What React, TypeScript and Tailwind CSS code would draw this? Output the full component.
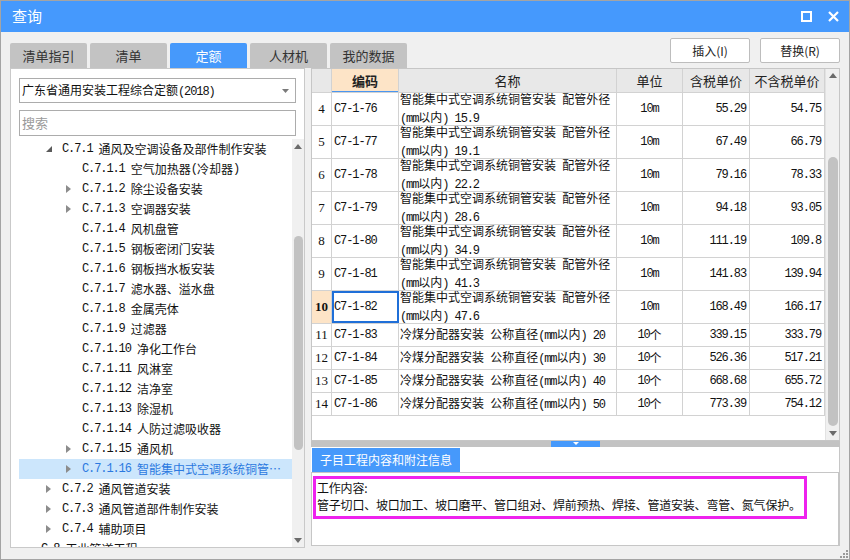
import React from "react";

type TreeNode = {
  code: string;
  name: string;
  level: 0 | 1 | 2;
  arrow?: "open" | "closed";
  sel?: boolean;
};

type Row = {
  no: number;
  code: string;
  name: string[];
  unit: string;
  tax: string;
  notax: string;
};

const tree: TreeNode[] = [
  { code: "C.7.1", name: "通风及空调设备及部件制作安装", level: 1, arrow: "open" },
  { code: "C.7.1.1", name: "空气加热器(冷却器)", level: 2 },
  { code: "C.7.1.2", name: "除尘设备安装", level: 2, arrow: "closed" },
  { code: "C.7.1.3", name: "空调器安装", level: 2, arrow: "closed" },
  { code: "C.7.1.4", name: "风机盘管", level: 2 },
  { code: "C.7.1.5", name: "钢板密闭门安装", level: 2 },
  { code: "C.7.1.6", name: "钢板挡水板安装", level: 2 },
  { code: "C.7.1.7", name: "滤水器、溢水盘", level: 2 },
  { code: "C.7.1.8", name: "金属壳体", level: 2 },
  { code: "C.7.1.9", name: "过滤器", level: 2 },
  { code: "C.7.1.10", name: "净化工作台", level: 2 },
  { code: "C.7.1.11", name: "风淋室", level: 2 },
  { code: "C.7.1.12", name: "洁净室", level: 2 },
  { code: "C.7.1.13", name: "除湿机", level: 2 },
  { code: "C.7.1.14", name: "人防过滤吸收器", level: 2 },
  { code: "C.7.1.15", name: "通风机", level: 2, arrow: "closed" },
  { code: "C.7.1.16", name: "智能集中式空调系统铜管…", level: 2, arrow: "closed", sel: true },
  { code: "C.7.2", name: "通风管道安装", level: 1, arrow: "closed" },
  { code: "C.7.3", name: "通风管道部件制作安装", level: 1, arrow: "closed" },
  { code: "C.7.4", name: "辅助项目", level: 1, arrow: "closed" },
  { code: "C.8", name: "工业管道工程", level: 0 },
];

const pipe = "智能集中式空调系统铜管安装 配管外径";
const dist = "冷煤分配器安装 公称直径(mm以内) ";

const rows: Row[] = [
  { no: 4, code: "C7-1-76", name: [pipe, "(mm以内) 15.9"], unit: "10m", tax: "55.29", notax: "54.75" },
  { no: 5, code: "C7-1-77", name: [pipe, "(mm以内) 19.1"], unit: "10m", tax: "67.49", notax: "66.79" },
  { no: 6, code: "C7-1-78", name: [pipe, "(mm以内) 22.2"], unit: "10m", tax: "79.16", notax: "78.33" },
  { no: 7, code: "C7-1-79", name: [pipe, "(mm以内) 28.6"], unit: "10m", tax: "94.18", notax: "93.05" },
  { no: 8, code: "C7-1-80", name: [pipe, "(mm以内) 34.9"], unit: "10m", tax: "111.19", notax: "109.8" },
  { no: 9, code: "C7-1-81", name: [pipe, "(mm以内) 41.3"], unit: "10m", tax: "141.83", notax: "139.94" },
  { no: 10, code: "C7-1-82", name: [pipe, "(mm以内) 47.6"], unit: "10m", tax: "168.49", notax: "166.17" },
  { no: 11, code: "C7-1-83", name: [dist + "20"], unit: "10个", tax: "339.15", notax: "333.79" },
  { no: 12, code: "C7-1-84", name: [dist + "30"], unit: "10个", tax: "526.36", notax: "517.21" },
  { no: 13, code: "C7-1-85", name: [dist + "40"], unit: "10个", tax: "668.68", notax: "655.72" },
  { no: 14, code: "C7-1-86", name: [dist + "50"], unit: "10个", tax: "773.39", notax: "754.12" },
];

const levelPad = {
  0: "pl-[2px]",
  1: "pl-[23px]",
  2: "pl-[43px]",
};

// ascii runs get a narrow mono face, like the half-width glyphs of the original
function Mix({ s }: { s: string }) {
  return (
    <>
      {s.split(/([ -~]+)/).map((p, i) =>
        /^[ -~]+$/.test(p) ? (
          <span
            key={i}
            className="[font-family:'Liberation_Mono',monospace] text-[12px] tracking-[-1.1px] whitespace-pre"
          >
            {p}
          </span>
        ) : (
          <span key={i}>{p}</span>
        )
      )}
    </>
  );
}

function UpArrow() {
  return (
    <svg width="8" height="5" viewBox="0 0 8 5">
      <path d="M0 5 L4 0 L8 5 Z" fill="#6b6b6b" />
    </svg>
  );
}

function DownArrow() {
  return (
    <svg width="8" height="5" viewBox="0 0 8 5">
      <path d="M0 0 L8 0 L4 5 Z" fill="#6b6b6b" />
    </svg>
  );
}

function TreeArrow({ kind }: { kind?: "open" | "closed" }) {
  if (kind === "open")
    return (
      <svg width="6" height="6" viewBox="0 0 6 6">
        <path d="M6 0 L6 6 L0 6 Z" fill="#5a5a5a" />
      </svg>
    );
  if (kind === "closed")
    return (
      <svg width="5" height="8" viewBox="0 0 5 8">
        <path d="M0 0 L5 4 L0 8 Z" fill="#8c8c8c" />
      </svg>
    );
  return null;
}

function TreePanel() {
  return (
    <div className="flex flex-1 min-h-0 mt-[3px]">
      <div className="flex-1 overflow-hidden text-[12px]">
        {tree.map((n) => (
          <div
            key={n.code}
            className={`ml-[8px] h-[20px] flex items-center whitespace-nowrap ${levelPad[n.level]} ${
              n.sel ? "bg-[#cce6fc] text-[#2b79e0]" : "text-[#111]"
            }`}
          >
            <span className="w-[20px] h-[20px] flex items-center pl-[4px]">
              <TreeArrow kind={n.arrow} />
            </span>
            <Mix s={`${n.code} ${n.name}`} />
          </div>
        ))}
      </div>
      <div className="w-[12px] flex flex-col items-center bg-[#f0f0f0]">
        <div className="h-[14px] flex items-center">
          <UpArrow />
        </div>
        <div className="h-[83px]" />
        <div className="h-[214px] w-[9px] rounded-full bg-[#c2c2c2]" />
        <div className="flex-1" />
        <div className="h-[14px] flex items-center">
          <DownArrow />
        </div>
      </div>
    </div>
  );
}

function LeftPanel() {
  return (
    <div className="w-[295px] h-[480px] border border-[#c9c9c9] bg-white flex flex-col">
      <div className="mt-[9px] mx-[8px] h-[25px] border border-[#acacac] flex items-center pl-[2px] pr-[6px] text-[12px] text-[#111]">
        <span className="flex-1">
          <Mix s="广东省通用安装工程综合定额(2018)" />
        </span>
        <svg width="7" height="4" viewBox="0 0 7 4">
          <path d="M0 0 L7 0 L3.5 4 Z" fill="#7a7a7a" />
        </svg>
      </div>
      <div className="mt-[7px] mx-[8px] h-[26px] border border-[#acacac] flex items-center pl-[2px] text-[13px] text-[#9a9a9a]">
        搜索
      </div>
      <TreePanel />
    </div>
  );
}

const cols = {
  no: "w-[20px]",
  code: "w-[67px]",
  name: "w-[218px]",
  unit: "w-[66px]",
  tax: "w-[67px]",
  notax: "w-[75px]",
};

function TableArea() {
  return (
    <div className="h-[373px] border border-[#c6c6c6] bg-white flex">
      <div className="w-[513px] flex flex-col">
        <div className="h-[24px] flex bg-[#e8e8e8] border-b border-[#d2d2d2] text-[13px] text-[#222]">
          <div className={`${cols.no} border-r border-[#d2d2d2]`} />
          <div
            className={`${cols.code} border-r border-[#d2d2d2] bg-[#fde4c7] font-bold flex items-center justify-center shadow-[inset_0_-1px_0_#4a96f0]`}
          >
            编码
          </div>
          <div className={`${cols.name} border-r border-[#d2d2d2] flex items-center justify-center`}>名称</div>
          <div className={`${cols.unit} border-r border-[#d2d2d2] flex items-center justify-center`}>单位</div>
          <div className={`${cols.tax} border-r border-[#d2d2d2] flex items-center justify-center`}>含税单价</div>
          <div className={`${cols.notax} border-r border-[#d2d2d2] flex items-center justify-center`}>不含税单价</div>
        </div>
        {rows.map((r) => {
          const tall = r.name.length > 1;
          const cur = r.no === 10;
          return (
            <div
              key={r.no}
              className={`${tall ? "h-[33px]" : "h-[23px]"} flex border-b border-[#d2d2d2] text-[12px] text-[#111]`}
            >
              <div
                className={`${cols.no} border-r border-[#d2d2d2] flex items-center justify-center [font-family:'Liberation_Serif',serif] text-[13px] ${
                  cur ? "bg-[#fde4c7] font-bold" : ""
                }`}
              >
                {r.no}
              </div>
              <div
                className={`${cols.code} border-r border-[#d2d2d2] flex items-center px-[2px] ${
                  cur ? "outline-2 outline-[#1f6fd8] -outline-offset-2" : ""
                }`}
              >
                <Mix s={r.code} />
              </div>
              <div
                className={`${cols.name} border-r border-[#d2d2d2] flex flex-col justify-center px-[1px] leading-[16px] whitespace-nowrap overflow-hidden`}
              >
                {r.name.map((l) => (
                  <div key={l}>
                    <Mix s={l} />
                  </div>
                ))}
              </div>
              <div className={`${cols.unit} border-r border-[#d2d2d2] flex items-center justify-center`}>
                <Mix s={r.unit} />
              </div>
              <div className={`${cols.tax} border-r border-[#d2d2d2] flex items-center justify-end pr-[3px]`}>
                <Mix s={r.tax} />
              </div>
              <div className={`${cols.notax} border-r border-[#d2d2d2] flex items-center justify-end pr-[3px]`}>
                <Mix s={r.notax} />
              </div>
            </div>
          );
        })}
      </div>
      <div className="w-[14px] flex flex-col items-center bg-[#f0f0f0] border-l border-[#e2e2e2]">
        <div className="h-[14px] flex items-center">
          <UpArrow />
        </div>
        <div className="h-[74px]" />
        <div className="h-[270px] w-[10px] rounded-full bg-[#c2c2c2]" />
        <div className="flex-1" />
        <div className="h-[14px] flex items-center">
          <DownArrow />
        </div>
      </div>
    </div>
  );
}

function BottomArea() {
  return (
    <div className="flex-1 flex flex-col bg-white border-r border-[#c6c6c6]">
      <div className="pt-[1px] flex">
        <div className="ml-[1px] w-[148px] h-[24px] bg-[#4699fb] text-white text-[12px] flex items-center justify-center">
          子目工程内容和附注信息
        </div>
      </div>
      <div className="h-[74px] border border-[#c6c6c6] bg-white">
        <div className="ml-[1px] mt-[3px] w-[494px] h-[43px] border-[3px] border-[#ee22ee] px-[1px] text-[12px] leading-[17px] text-[#111] whitespace-nowrap tracking-[-0.2px] overflow-hidden">
          <div>工作内容:</div>
          <div>管子切口、坡口加工、坡口磨平、管口组对、焊前预热、焊接、管道安装、弯管、氮气保护。</div>
        </div>
      </div>
    </div>
  );
}

const tabs = ["清单指引", "清单", "定额", "人材机", "我的数据"];

export default function App() {
  return (
    <div className="w-[850px] h-[560px] bg-[#f0f0f0] border border-[#a4a4a4] flex flex-col [font-family:'Noto_Sans_CJK_SC',sans-serif] overflow-hidden">
      <div className="h-[31px] bg-[#4599fd] flex items-center pl-[11px] pr-[10px] text-white">
        <span className="text-[15px] flex-1">查询</span>
        <svg width="11" height="11" viewBox="0 0 11 11" className="mr-[16px]">
          <rect x="1" y="1" width="9" height="9" fill="none" stroke="#fff" strokeWidth="2" />
        </svg>
        <svg width="11" height="11" viewBox="0 0 11 11">
          <path d="M1 1 L10 10 M10 1 L1 10" stroke="#fff" strokeWidth="2.2" />
        </svg>
      </div>
      <div className="h-[36px] flex px-[9px]">
        <div className="flex items-end gap-[3px]">
          {tabs.map((t) => (
            <div
              key={t}
              className={`w-[77px] h-[25px] flex items-center justify-center text-[13px] rounded-t-[2px] ${
                t === "定额" ? "bg-[#4699fb] text-white" : "bg-[#c3c3c3] text-[#333]"
              }`}
            >
              {t}
            </div>
          ))}
        </div>
        <div className="flex-1" />
        <div className="flex gap-[10px] mt-[6px]">
          <button className="w-[80px] h-[25px] bg-white border border-[#bdbdbd] rounded-[2px] text-[12px] text-[#222]">
            插入(I)
          </button>
          <button className="w-[80px] h-[25px] bg-white border border-[#bdbdbd] rounded-[2px] text-[12px] text-[#222]">
            替换(R)
          </button>
        </div>
      </div>
      <div className="flex px-[9px] gap-[6px] h-[480px]">
        <LeftPanel />
        <div className="w-[529px] flex flex-col h-[478px]">
          <TableArea />
          <div className="h-[6px] bg-[#c3c3c3] flex justify-center">
            <div className="w-[49px] h-[6px] bg-[#4699fb] flex justify-center items-start pt-[1px]">
              <svg width="6" height="3" viewBox="0 0 6 3">
                <path d="M0 0 L6 0 L3 3 Z" fill="#fff" />
              </svg>
            </div>
          </div>
          <BottomArea />
        </div>
      </div>
      <div className="flex-1 flex justify-end items-end pr-[1px] pb-[1px]">
        <svg width="9" height="9" viewBox="0 0 9 9">
          <rect x="7" y="1" width="2" height="2" fill="#9a9a9a" />
          <rect x="4" y="4" width="2" height="2" fill="#9a9a9a" />
          <rect x="7" y="4" width="2" height="2" fill="#9a9a9a" />
          <rect x="1" y="7" width="2" height="2" fill="#9a9a9a" />
          <rect x="4" y="7" width="2" height="2" fill="#9a9a9a" />
          <rect x="7" y="7" width="2" height="2" fill="#9a9a9a" />
        </svg>
      </div>
    </div>
  );
}
